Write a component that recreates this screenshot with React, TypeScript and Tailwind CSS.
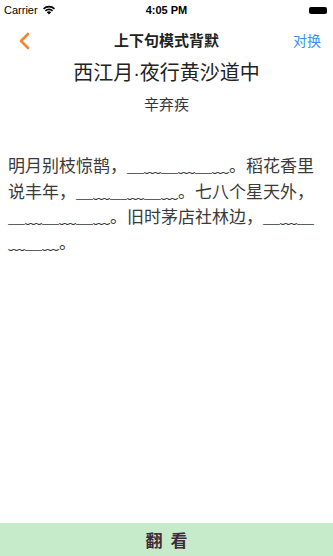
import React from "react";

const CJK = "font-['Noto_Sans_CJK_SC','Noto_Sans',sans-serif]";
const BLANK = "＿﹏＿﹏＿﹏";

function StatusBar() {
  return (
    <div className="relative flex h-5 items-center justify-between px-[4px] text-[11px] text-black font-['Liberation_Sans',sans-serif]">
      <div className="flex items-center gap-1">
        <span>Carrier</span>
        <svg width="14" height="10" viewBox="0 0 14 10">
          <path d="M7 9.5 L4.8 7.2 A3.2 3.2 0 0 1 9.2 7.2 Z" fill="#000" />
          <path d="M2.9 5.3 A5.8 5.8 0 0 1 11.1 5.3 L10 6.4 A4.2 4.2 0 0 0 4 6.4 Z" fill="#000" />
          <path d="M1 3.3 A8.5 8.5 0 0 1 13 3.3 L11.9 4.4 A7 7 0 0 0 2.1 4.4 Z" fill="#000" />
        </svg>
      </div>
      <span className="absolute left-1/2 -translate-x-1/2 font-semibold">4:05 PM</span>
      <div className="h-[7px] w-[18px] rounded-[2px] bg-black mr-[2px]" />
    </div>
  );
}

function NavBar() {
  return (
    <div className={`relative flex h-11 items-center justify-between pl-[18px] pr-[12px] pb-[3px] ${CJK}`}>
      <svg width="12" height="18" viewBox="0 0 12 18">
        <path d="M10 2 L3 9 L10 16" stroke="#f5862b" strokeWidth="2.6" fill="none" strokeLinecap="round" strokeLinejoin="round" />
      </svg>
      <span className="absolute left-1/2 top-[9px] -translate-x-1/2 text-[15px] font-bold text-[#222]">上下句模式背默</span>
      <span className="text-[14px] text-[#3a8ff2]">对换</span>
    </div>
  );
}

export default function App() {
  return (
    <div className={`flex h-[556px] w-[333px] flex-col bg-white ${CJK}`}>
      <StatusBar />
      <NavBar />
      <div className="mt-[-6px] text-center text-[20px] leading-7 text-[#222]">
        西江月<span className="font-['Liberation_Sans',sans-serif]">·</span>夜行黄沙道中
      </div>
      <div className="mt-[5px] text-center text-[15px] leading-6 text-[#333]">辛弃疾</div>
      <p className="mt-[36px] px-[8px] text-[17px] leading-[25.5px] text-[#3a3a3a] break-all">
        明月别枝惊鹊，{BLANK}。稻花香里说丰年，{BLANK}。七八个星天外，{BLANK}。旧时茅店社林边，{BLANK}。
      </p>
      <div className="flex-1" />
      <div className="flex h-[33px] items-center justify-center bg-[#c6ebcb]">
        <span className="text-[17px] font-bold tracking-[8px] pl-[8px] text-[#3d2a3b]">翻看</span>
      </div>
    </div>
  );
}
